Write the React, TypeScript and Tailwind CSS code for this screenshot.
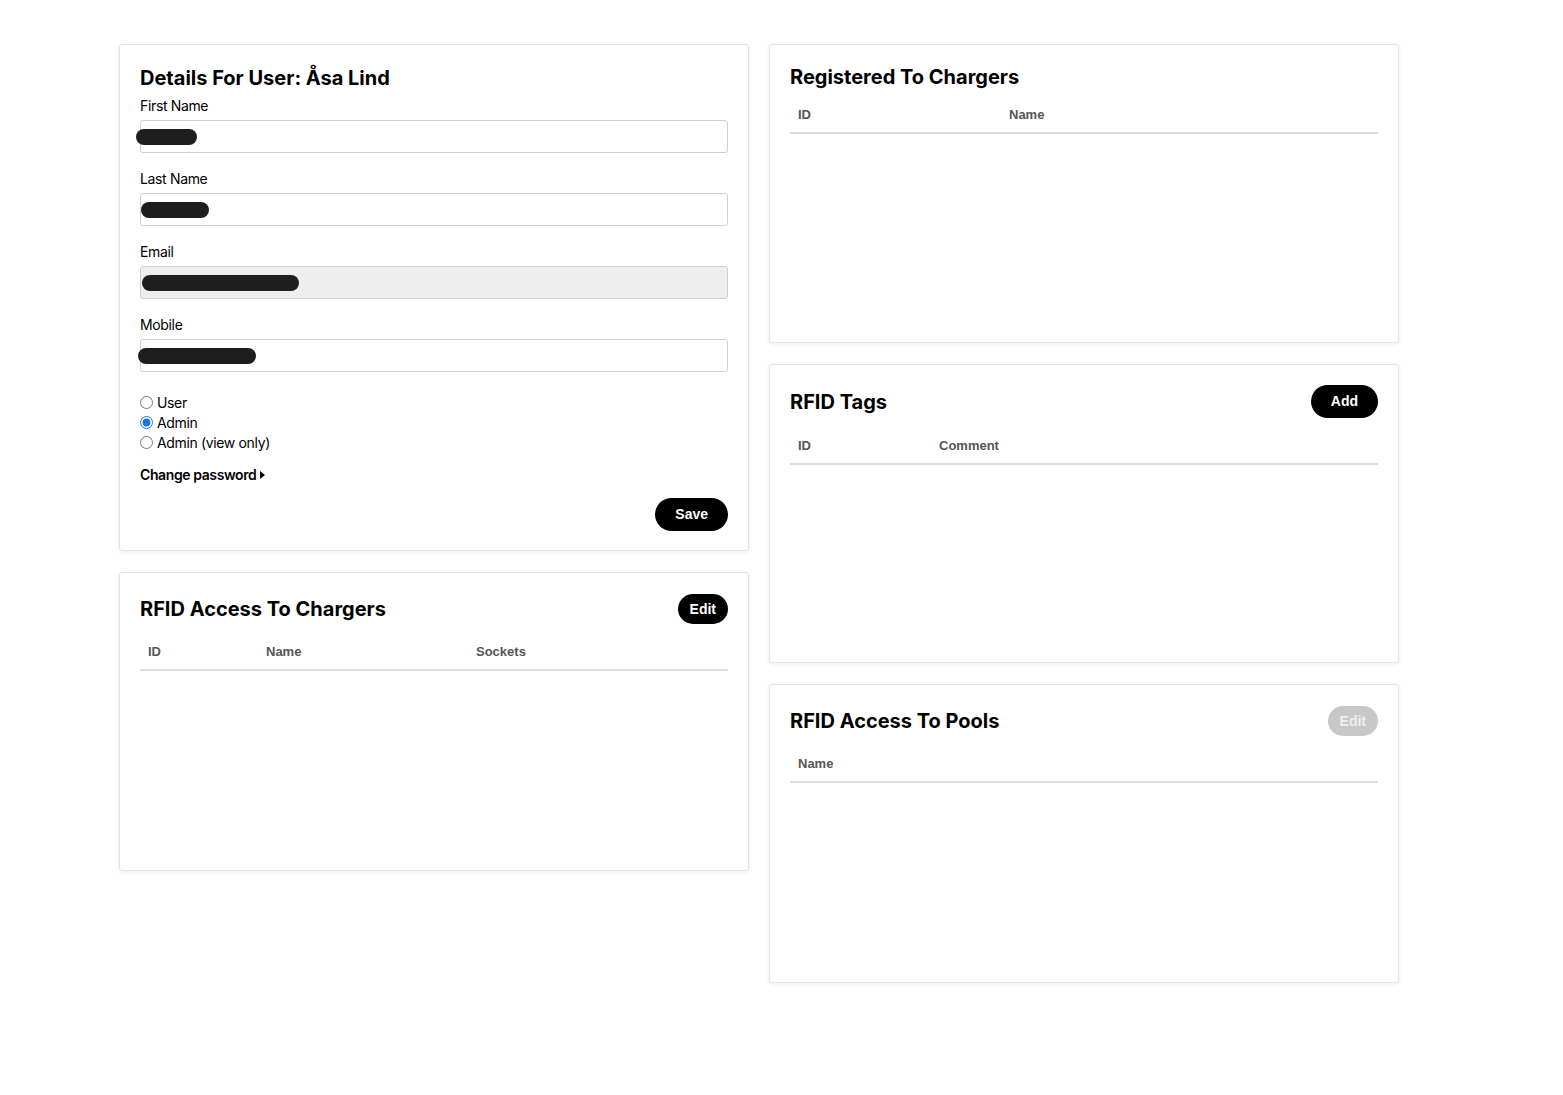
import React from "react";

const heading = "font-['Inter','Noto_Sans',sans-serif]";
const ui = "font-['Liberation_Sans','Arial',sans-serif]";

function Card({ className = "", children }: { className?: string; children: React.ReactNode }) {
  return (
    <div className={`bg-white border border-[#e2e2e2] rounded-[3px] shadow-[0_1px_4px_rgba(0,0,0,0.08)] px-[20px] ${className}`}>
      {children}
    </div>
  );
}

function Title({ children }: { children: React.ReactNode }) {
  return (
    <h2 className={`${heading} text-[20px] leading-[24px] font-bold tracking-[0px] text-black`}>{children}</h2>
  );
}

function PillButton({ label, disabled, size = "md" }: { label: string; disabled?: boolean; size?: "md" | "sm" }) {
  const dims = size === "md" ? "h-[33px] px-[20px]" : "h-[30px] px-[12px]";
  return (
    <button
      className={`${ui} ${dims} rounded-full text-[14px] font-bold ${disabled ? "bg-[#c8c8c8] text-[#eeeeee]" : "bg-black text-white"}`}
    >
      {label}
    </button>
  );
}

function TableHead({ cols }: { cols: { label: string; w?: string }[] }) {
  return (
    <div className={`${ui} flex border-b-2 border-[#dddddd] text-[13px] font-bold text-[#555] h-[37px] items-center`}>
      {cols.map((c) => (
        <div key={c.label} className={`${c.w ?? "flex-1"} px-[8px]`}>
          {c.label}
        </div>
      ))}
    </div>
  );
}

function Field({ label, blob, disabled }: { label: string; blob: string; disabled?: boolean }) {
  return (
    <div className="mb-[16px]">
      <div className="text-[14px] leading-[20px] mb-[4px] text-black tracking-[-0.35px]">{label}</div>
      <div className={`relative h-[33px] border border-[#cfcfcf] rounded-[3px] ${disabled ? "bg-[#eeeeee]" : "bg-white"}`}>
        <div className={`absolute top-1/2 -translate-y-1/2 h-[16px] rounded-full bg-[#1e1e1e] blur-[0.4px] ${blob}`} />
      </div>
    </div>
  );
}

function Radio({ label, checked }: { label: string; checked?: boolean }) {
  return (
    <label className="flex items-center gap-[4px] h-[20px] text-[14px] text-black tracking-[-0.35px]">
      <input type="radio" name="role" defaultChecked={checked} className="m-0 w-[13px] h-[13px] accent-[#1a73e8]" />
      {label}
    </label>
  );
}

export default function App() {
  return (
    <div className={`${heading} min-h-screen bg-white pt-[44px] pl-[119px]`}>
      <div className="flex gap-[20px] items-start">
        <div className="w-[630px] flex flex-col gap-[21px]">
          <Card className="h-[507px] pt-[21px]">
            <Title>Details For User: Åsa Lind</Title>
            <div className="mt-[6px]">
              <Field label="First Name" blob="left-[-5px] w-[61px]" />
              <Field label="Last Name" blob="left-[0px] w-[68px]" />
              <Field label="Email" blob="left-[1px] w-[157px]" disabled />
              <Field label="Mobile" blob="left-[-3px] w-[118px]" />
            </div>
            <div className="mt-[20px] flex flex-col">
              <Radio label="User" />
              <Radio label="Admin" checked />
              <Radio label="Admin (view only)" />
            </div>
            <div className="mt-[12px] flex items-center gap-[4px] text-[14px] font-semibold text-black tracking-[-0.4px]">
              Change password
              <svg width="5" height="8" viewBox="0 0 5 8"><path d="M0 0L5 4L0 8Z" fill="black" /></svg>
            </div>
            <div className="flex justify-end mt-[13px]">
              <PillButton label="Save" />
            </div>
          </Card>
          <Card className="h-[299px] pt-[21px]">
            <div className="flex items-center justify-between">
              <Title>RFID Access To Chargers</Title>
              <PillButton label="Edit" size="sm" />
            </div>
            <div className="mt-[10px]">
              <TableHead cols={[{ label: "ID", w: "w-[118px]" }, { label: "Name", w: "w-[210px]" }, { label: "Sockets" }]} />
            </div>
          </Card>
        </div>
        <div className="w-[630px] flex flex-col gap-[21px]">
          <Card className="h-[299px] pt-[20px]">
            <Title>Registered To Chargers</Title>
            <div className="mt-[8px]">
              <TableHead cols={[{ label: "ID", w: "w-[211px]" }, { label: "Name" }]} />
            </div>
          </Card>
          <Card className="h-[299px] pt-[20px]">
            <div className="flex items-center justify-between">
              <Title>RFID Tags</Title>
              <PillButton label="Add" />
            </div>
            <div className="mt-[10px]">
              <TableHead cols={[{ label: "ID", w: "w-[141px]" }, { label: "Comment" }]} />
            </div>
          </Card>
          <Card className="h-[299px] pt-[21px]">
            <div className="flex items-center justify-between">
              <Title>RFID Access To Pools</Title>
              <PillButton label="Edit" size="sm" disabled />
            </div>
            <div className="mt-[10px]">
              <TableHead cols={[{ label: "Name" }]} />
            </div>
          </Card>
        </div>
      </div>
    </div>
  );
}
